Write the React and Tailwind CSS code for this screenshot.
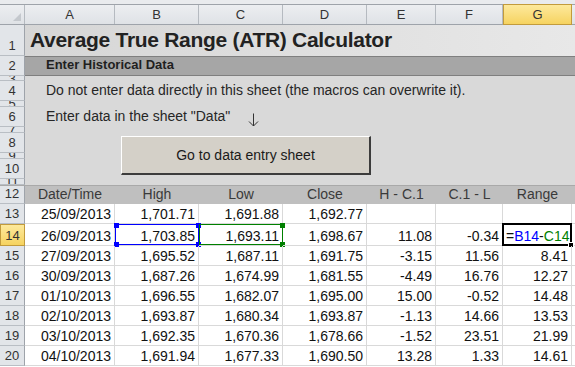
import React from "react";

const COLW = ["w-[90px]", "w-[84px]", "w-[84px]", "w-[84px]", "w-[69px]", "w-[67px]", "w-[69px]"];
const LETTERS = ["A", "B", "C", "D", "E", "F", "G"];
const HEADS = ["Date/Time", "High", "Low", "Close", "H - C.1", "C.1 - L", "Range"];

const DATA = [
  [13, ["25/09/2013", "1,701.71", "1,691.88", "1,692.77", "", "", ""]],
  [14, ["26/09/2013", "1,703.85", "1,693.11", "1,698.67", "11.08", "-0.34", "F"]],
  [15, ["27/09/2013", "1,695.52", "1,687.11", "1,691.75", "-3.15", "11.56", "8.41"]],
  [16, ["30/09/2013", "1,687.26", "1,674.99", "1,681.55", "-4.49", "16.76", "12.27"]],
  [17, ["01/10/2013", "1,696.55", "1,682.07", "1,695.00", "15.00", "-0.52", "14.48"]],
  [18, ["02/10/2013", "1,693.87", "1,680.34", "1,693.87", "-1.13", "14.66", "13.53"]],
  [19, ["03/10/2013", "1,692.35", "1,670.36", "1,678.66", "-1.52", "23.51", "21.99"]],
  [20, ["04/10/2013", "1,691.94", "1,677.33", "1,690.50", "13.28", "1.33", "14.61"]],
];

function RowHead({ n, h, sel, hidden }) {
  const base = sel
    ? "bg-gradient-to-b from-[#fde99b] to-[#f6d35f] border border-[#c29b3c]"
    : "bg-[#e2e5e9] border-r border-b border-r-[#9ea3aa] border-b-[#b9bec4]";
  return (
    <div
      className={`w-[25px] shrink-0 flex justify-center overflow-hidden leading-none text-[#333] ${
        hidden ? "items-center text-[13px]" : "items-end pb-[3px] text-[13px]"
      } ${h} ${base}`}
    >
      {n}
    </div>
  );
}

function Handle({ pos, color }) {
  return <div className={`absolute w-[5px] h-[5px] ${pos} ${color}`} />;
}

export default function App() {
  return (
    <div className="w-[575px] h-[367px] overflow-hidden bg-white font-[family-name:Liberation_Sans,Arial,sans-serif] text-[#222]">
      {/* top strip */}
      <div className="h-[5px] bg-[#e9ebee] border-b border-[#9ea3aa]" />

      {/* column headers */}
      <div className="flex h-[20px] border-b border-[#9ea3aa] bg-gradient-to-b from-[#eceef1] to-[#dfe2e6] text-[13px] text-[#333]">
        <div className="w-[25px] shrink-0 border-r border-[#b5bac0] relative">
          <div className="absolute right-[3px] bottom-[3px] w-0 h-0 border-l-[8px] border-l-transparent border-b-[8px] border-b-[#c4c8cd]" />
        </div>
        {LETTERS.map((l, i) =>
          l === "G" ? (
            <div
              key={l}
              className={`${COLW[i]} shrink-0 flex items-center justify-center bg-gradient-to-b from-[#fde99b] to-[#f6d35f] border border-[#c29b3c] -mt-px -mb-px`}
            >
              {l}
            </div>
          ) : (
            <div key={l} className={`${COLW[i]} shrink-0 flex items-center justify-center border-r border-[#b5bac0]`}>
              {l}
            </div>
          )
        )}
        <div className="flex-1" />
      </div>

      {/* row 1 */}
      <div className="flex h-[31px]">
        <RowHead n={1} h="h-[31px]" />
        <div className="flex-1 flex items-end pl-[5px] pb-[3px] bg-gradient-to-r from-[#d6d6d6] to-[#e8e8e8]">
          <span className="text-[21px] leading-[26px] font-bold tracking-[-0.3px] text-[#222]">
            Average True Range (ATR) Calculator
          </span>
        </div>
      </div>

      {/* row 2 */}
      <div className="flex h-[20px]">
        <RowHead n={2} h="h-[20px]" />
        <div className="flex-1 flex items-end pl-[21px] pb-[2px] bg-[#a6a6a6] border-t border-b border-[#7f7f7f]">
          <span className="text-[13px] leading-[16px] font-bold text-[#1f1f1f]">Enter Historical Data</span>
        </div>
      </div>

      {/* rows 3-11 */}
      <div className="flex h-[109px]">
        <div className="flex flex-col">
          <RowHead n={3} h="h-[5px]" hidden />
          <RowHead n={4} h="h-[20px]" />
          <RowHead n={5} h="h-[6px]" hidden />
          <RowHead n={6} h="h-[20px]" />
          <RowHead n={7} h="h-[6px]" hidden />
          <RowHead n={8} h="h-[20px]" />
          <RowHead n={9} h="h-[6px]" hidden />
          <RowHead n={10} h="h-[20px]" />
          <RowHead n={11} h="h-[6px]" hidden />
        </div>
        <div className="flex-1 flex flex-col bg-[#d9d9d9] text-[14px] text-[#262626]">
          <div className="mt-[5px] h-[20px] flex items-end pl-[21px] pb-[3px] leading-[16px]">
            Do not enter data directly in this sheet (the macros can overwrite it).
          </div>
          <div className="mt-[6px] h-[20px] flex items-end pl-[21px] pb-[3px] leading-[16px]">
            <span>Enter data in the sheet "Data"</span>
            <svg className="ml-[18px] mb-[-3px] shrink-0" width="11" height="14" viewBox="0 0 11 14" fill="none">
              <path d="M5.5 0.5V13" stroke="#333" strokeWidth="1" />
              <path d="M1 8.5L5.5 13L10 8.5" stroke="#333" strokeWidth="1" />
            </svg>
          </div>
          <div className="mt-[9px] ml-[96px] w-[250px] h-[39px] flex items-center justify-center bg-[#d4d0c8] border-t border-l border-white border-r-2 border-b-2 border-r-[#3c3c3c] border-b-[#3c3c3c] text-[14px] text-[#1a1a1a]">
            Go to data entry sheet
          </div>
        </div>
      </div>

      {/* row 12 */}
      <div className="flex h-[19px] border-t border-[#a9a9a9]">
        <RowHead n={12} h="h-[18px]" />
        {HEADS.map((t, i) => (
          <div
            key={t}
            className={`${COLW[i]} shrink-0 flex items-end justify-center pb-[2px] bg-[#bfbfbf] text-[14px] leading-[16px] text-[#3a3a3a]`}
          >
            {t}
          </div>
        ))}
        <div className="flex-1 bg-[#bfbfbf]" />
      </div>

      {/* data rows */}
      {DATA.map(([n, vals]) => {
        const sel = n === 14;
        const h = n === 14 ? "h-[22px]" : "h-[20px]";
        return (
          <div key={n} className={`flex ${h}`}>
            <RowHead n={n} h={h} sel={sel} />
            {vals.map((v, i) => {
              const isFormula = v === "F";
              return (
                <div
                  key={i}
                  className={`${COLW[i]} shrink-0 relative flex items-end ${
                    isFormula ? "justify-start pl-[3px]" : "justify-end pr-[3px]"
                  } pb-[1px] border-r border-b border-[#d9d9d9] text-[14px] leading-[16px] text-[#111]`}
                >
                  {isFormula ? (
                    <span>
                      =<span className="text-[#0000ff]">B14</span>-<span className="text-[#008000]">C14</span>
                    </span>
                  ) : (
                    v
                  )}
                  {sel && i === 1 && (
                    <div className="absolute left-0 top-0 right-[-1px] bottom-0 border border-[#0000ff]">
                      <Handle pos="-left-[2px] -top-[2px]" color="bg-[#0000ff]" />
                      <Handle pos="-right-[3px] -top-[2px]" color="bg-[#0000ff]" />
                      <Handle pos="-left-[2px] -bottom-[3px]" color="bg-[#0000ff]" />
                      <Handle pos="-right-[3px] -bottom-[3px]" color="bg-[#0000ff]" />
                    </div>
                  )}
                  {sel && i === 2 && (
                    <div className="absolute left-0 top-0 right-[-1px] bottom-0 border border-[#008000]">
                      <Handle pos="-right-[3px] -top-[2px]" color="bg-[#008000]" />
                      <Handle pos="-right-[3px] -bottom-[3px]" color="bg-[#008000]" />
                    </div>
                  )}
                  {sel && i === 6 && (
                    <div className="absolute -left-px -right-px -top-px -bottom-px border-2 border-black">
                      <div className="absolute -right-[4px] -bottom-[4px] w-[6px] h-[6px] bg-black border border-white" />
                    </div>
                  )}
                </div>
              );
            })}
            <div className="flex-1 border-b border-[#d9d9d9]" />
          </div>
        );
      })}
    </div>
  );
}
